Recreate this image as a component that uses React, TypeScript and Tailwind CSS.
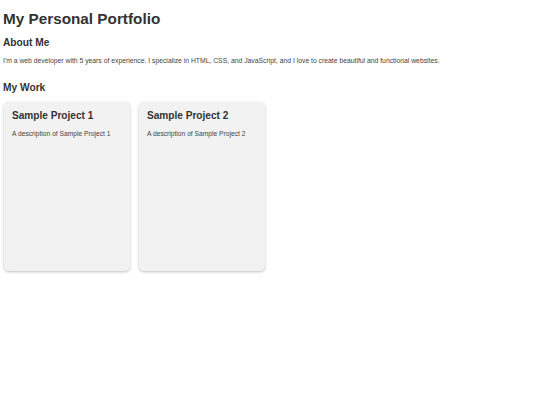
const projects = [
  { title: 'Sample Project 1', desc: 'A description of Sample Project 1' },
  { title: 'Sample Project 2', desc: 'A description of Sample Project 2' },
];

export default function App() {
  return (
    <div className="min-h-[405px] w-[540px] bg-white px-[3px] text-[#333] [font-family:'Liberation_Sans',Arial,sans-serif]">
      <h1 className="pt-[10px] text-[15.3px] font-bold leading-[18px]">My Personal Portfolio</h1>

      <h2 className="mt-[9px] text-[10.2px] font-bold leading-[12px]">About Me</h2>
      <p className="mt-[8px] text-[6.8px] leading-[8px] text-[#444]">
        I'm a web developer with 5 years of experience. I specialize in HTML, CSS, and JavaScript, and I love to create beautiful and functional websites.
      </p>

      <h2 className="mt-[17px] text-[10.2px] font-bold leading-[12px]">My Work</h2>
      <div className="ml-[1px] mt-[8px] flex gap-[9px]">
        {projects.map((p) => (
          <div
            key={p.title}
            className="h-[169px] w-[126px] rounded-[5px] bg-[#f2f2f2] px-[8px] pt-[8px] shadow-[0_1px_3px_rgba(0,0,0,0.25)]"
          >
            <h3 className="text-[10.1px] font-bold leading-[12px]">{p.title}</h3>
            <p className="mt-[8px] text-[6.7px] leading-[8px] text-[#444]">{p.desc}</p>
          </div>
        ))}
      </div>
    </div>
  );
}
